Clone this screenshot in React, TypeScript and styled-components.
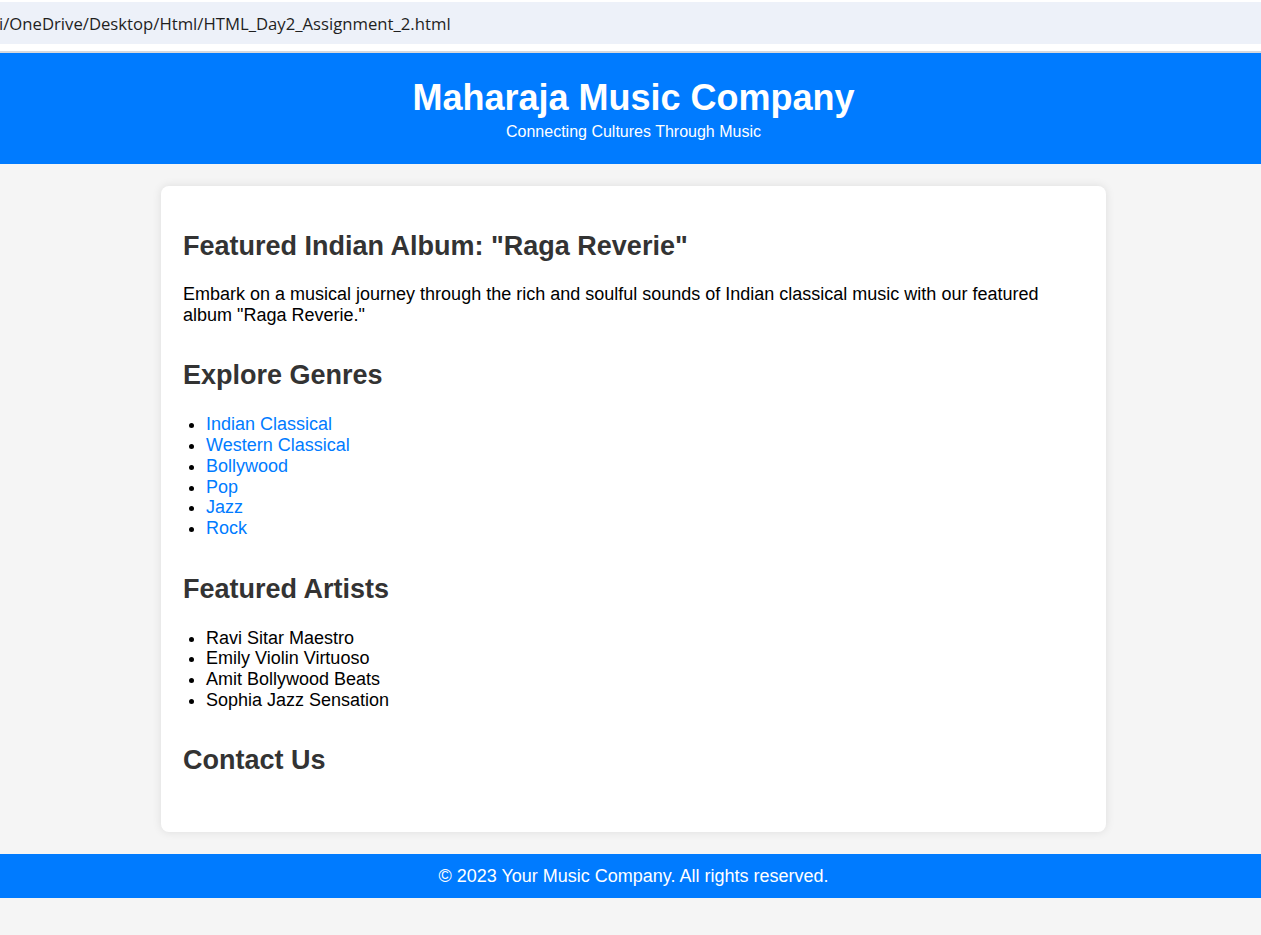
import React from "react";
import styled, { createGlobalStyle } from "styled-components";

const GlobalStyle = createGlobalStyle`
  html, body {
    margin: 0;
    padding: 0;
    background: #f5f5f5;
  }
  body {
    font-family: "Liberation Sans", Arial, sans-serif;
    font-size: 18px;
    line-height: 1.15;
    color: #000;
  }
`;

const Chrome = styled.div`
  background: #ffffff;
  padding-top: 2px;
  height: 49px;
  border-bottom: 2px solid #d6d9de;
`;

const UrlField = styled.div`
  height: 42px;
  background: #edf1f9;
  display: flex;
  align-items: center;
  padding-top: 1px;
  box-sizing: border-box;
  font-family: "Open Sans", "Noto Sans", sans-serif;
  font-size: 16.7px;
  color: #1f1f1f;
  white-space: nowrap;
  overflow: hidden;
`;

const UrlText = styled.span`
  margin-left: -1px;
`;

const Header = styled.header`
  background: #007bff;
  color: #ffffff;
  text-align: center;
  padding: 24px 0 23px 6px;
`;

const Title = styled.h1`
  margin: 0;
  font-size: 36px;
  font-weight: bold;
  line-height: 41px;
`;

const Tagline = styled.p`
  margin: 5px 0 0;
  font-size: 16px;
  line-height: 18px;
`;

const Main = styled.main`
  padding: 22px 0 22px 6px;
`;

const Card = styled.div`
  width: 945px;
  box-sizing: border-box;
  margin: 0 auto;
  background: #ffffff;
  border-radius: 8px;
  box-shadow: 0 0 10px rgba(0, 0, 0, 0.1);
  padding: 45px 22px 56px;
`;

const Section = styled.section<{ $gap?: number }>`
  & + & {
    margin-top: ${(p) => p.$gap ?? 34}px;
  }
`;

const Heading = styled.h2`
  margin: 0;
  font-size: 27px;
  font-weight: bold;
  color: #333333;
  line-height: 31px;
`;

const Paragraph = styled.p`
  margin: 22px 0 0;
  line-height: 20.7px;
`;

const List = styled.ul`
  margin: 23px 0 0;
  padding-left: 23px;
  line-height: 20.7px;
`;

const Item = styled.li``;

const Link = styled.a`
  color: #007bff;
  text-decoration: none;
`;

const Footer = styled.footer`
  background: #007bff;
  color: #ffffff;
  text-align: center;
  height: 44px;
  box-sizing: border-box;
  padding: 12px 0 0 6px;
  font-size: 18px;
  line-height: 20px;
`;

const genres = [
  "Indian Classical",
  "Western Classical",
  "Bollywood",
  "Pop",
  "Jazz",
  "Rock",
];

const artists = [
  "Ravi Sitar Maestro",
  "Emily Violin Virtuoso",
  "Amit Bollywood Beats",
  "Sophia Jazz Sensation",
];

export default function App() {
  return (
    <>
      <GlobalStyle />
      <Chrome>
        <UrlField>
          <UrlText>i/OneDrive/Desktop/Html/HTML_Day2_Assignment_2.html</UrlText>
        </UrlField>
      </Chrome>
      <Header>
        <Title>Maharaja Music Company</Title>
        <Tagline>Connecting Cultures Through Music</Tagline>
      </Header>
      <Main>
        <Card>
          <Section>
            <Heading>Featured Indian Album: "Raga Reverie"</Heading>
            <Paragraph>
              Embark on a musical journey through the rich and soulful sounds of
              Indian classical music with our featured album "Raga Reverie."
            </Paragraph>
          </Section>
          <Section>
            <Heading>Explore Genres</Heading>
            <List>
              {genres.map((g) => (
                <Item key={g}>
                  <Link href="#">{g}</Link>
                </Item>
              ))}
            </List>
          </Section>
          <Section $gap={33.5}>
            <Heading>Featured Artists</Heading>
            <List>
              {artists.map((a) => (
                <Item key={a}>{a}</Item>
              ))}
            </List>
          </Section>
          <Section $gap={35}>
            <Heading>Contact Us</Heading>
          </Section>
        </Card>
      </Main>
      <Footer>© 2023 Your Music Company. All rights reserved.</Footer>
    </>
  );
}
